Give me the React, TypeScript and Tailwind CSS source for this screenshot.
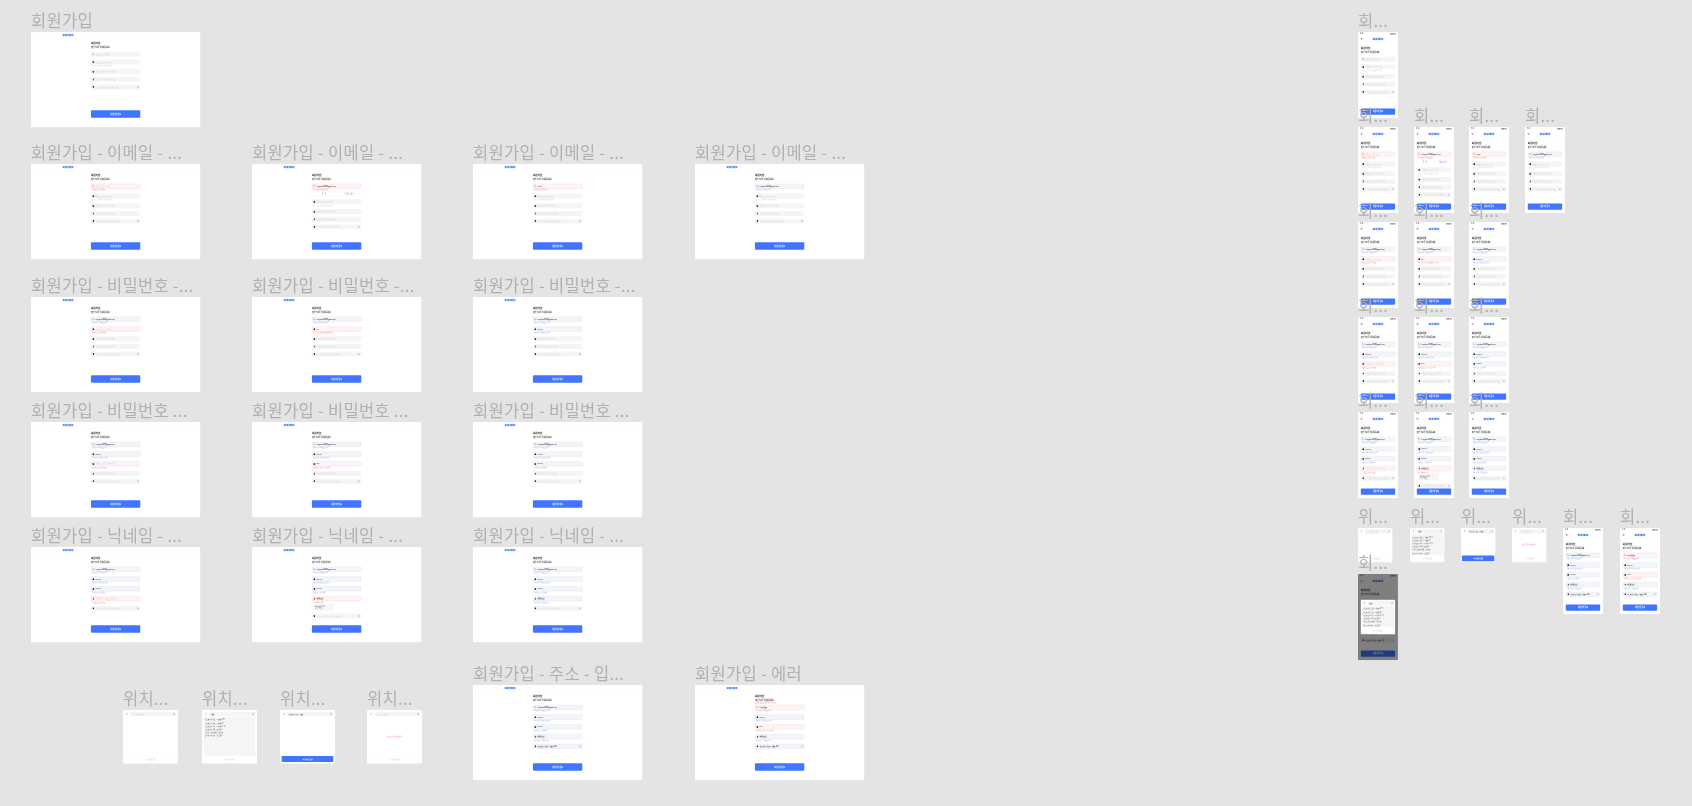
import type { ReactNode } from "react";
import { ArrowLeft, ChevronLeft, Lock, LockKeyhole, Mail, MapPin, Search, UserRound } from "lucide-react";

type FieldData = {
  icon: typeof Mail;
  placeholder: string;
  value?: string;
  state?: "idle" | "error" | "ok";
  hint?: string;
  search?: boolean;
  dup?: boolean;
  suggest?: boolean;
};

const EMAIL: FieldData = { icon: Mail, placeholder: "이메일을 입력해주세요" };
const PW: FieldData = { icon: Lock, placeholder: "비밀번호를 입력해주세요", hint: "영문, 숫자, 특수문자 포함 8자 이상" };
const CONFIRM: FieldData = { icon: LockKeyhole, placeholder: "비밀번호를 다시 입력해주세요" };
const NICK: FieldData = { icon: UserRound, placeholder: "닉네임을 2자 이상 입력해주세요" };
const LOC: FieldData = { icon: MapPin, placeholder: "주소를 검색하여 위치를 설정해주세요", search: true };

const emailOk: FieldData = { ...EMAIL, value: "rockybee1234@gmail.com", state: "ok", hint: "사용 가능한 이메일입니다" };
const pwOk: FieldData = { ...PW, value: "••••••••••", state: "ok", hint: "사용 가능한 비밀번호입니다" };
const confirmOk: FieldData = { ...CONFIRM, value: "••••••••••", state: "ok", hint: "비밀번호가 일치합니다" };
const nickOk: FieldData = { ...NICK, value: "행복한꿀벌", state: "ok", hint: "사용 가능한 닉네임입니다" };
const locOk: FieldData = { ...LOC, value: "서울특별시 강남구 역삼동 123", state: "ok" };

const screens = {
  base: [EMAIL, PW, CONFIRM, NICK, LOC],
  emailEmpty: [{ ...EMAIL, state: "error", hint: "이메일을 입력해주세요" }, PW, CONFIRM, NICK, LOC],
  emailDup: [
    { ...EMAIL, value: "rockybee1234@gmail.com", state: "error", hint: "이미 가입된 이메일입니다", dup: true },
    PW,
    CONFIRM,
    NICK,
    LOC,
  ],
  emailBad: [{ ...EMAIL, value: "rocky", state: "error", hint: "이메일 형식이 아닙니다" }, PW, CONFIRM, NICK, LOC],
  emailOk: [emailOk, PW, CONFIRM, NICK, LOC],
  pwEmpty: [emailOk, { ...PW, state: "error", hint: "비밀번호를 입력해주세요" }, CONFIRM, NICK, LOC],
  pwBad: [emailOk, { ...PW, value: "••••", state: "error", hint: "영문, 숫자, 특수문자 포함 8자 이상" }, CONFIRM, NICK, LOC],
  pwOk: [emailOk, pwOk, CONFIRM, NICK, LOC],
  confirmEmpty: [emailOk, pwOk, { ...CONFIRM, state: "error", hint: "비밀번호를 입력해주세요" }, NICK, LOC],
  confirmBad: [emailOk, pwOk, { ...CONFIRM, value: "••••••", state: "error", hint: "비밀번호가 일치하지 않습니다" }, NICK, LOC],
  confirmOk: [emailOk, pwOk, confirmOk, NICK, LOC],
  nickEmpty: [emailOk, pwOk, confirmOk, { ...NICK, state: "error", hint: "닉네임을 입력해주세요" }, LOC],
  nickDup: [emailOk, pwOk, confirmOk, { ...NICK, value: "행복한꿀벌", state: "error", hint: "이미 사용중입니다", suggest: true }, LOC],
  nickOk: [emailOk, pwOk, confirmOk, nickOk, LOC],
  done: [emailOk, pwOk, confirmOk, nickOk, locOk],
  failed: [
    { ...emailOk, state: "error", hint: "이미 가입된 이메일입니다", value: "rocky@gm" },
    pwOk,
    { ...confirmOk, state: "error", hint: "비밀번호가 일치하지 않습니다", value: "••••••" },
    nickOk,
    locOk,
  ],
} satisfies Record<string, FieldData[]>;

const Field = ({ data }: { data: FieldData }) => {
  const Icon = data.icon;
  const state = data.state ?? "idle";
  return (
    <div className="flex flex-col">
      <div
        className={
          state === "error"
            ? "flex h-[42px] items-center gap-[8px] rounded-[6px] border-2 border-[#ffb9b9] bg-[#fdf5f5] px-[10px]"
            : state === "ok"
              ? "flex h-[42px] items-center gap-[8px] rounded-[6px] border-2 border-[#c4d4ff] bg-[#f5f5f5] px-[10px]"
              : "flex h-[42px] items-center gap-[8px] rounded-[6px] bg-[#f5f5f5] px-[12px]"
        }
      >
        <Icon size={18} className={data.icon === Mail ? "shrink-0 text-[#666666]" : "shrink-0 fill-[#222222] text-[#222222]"} />
        <span className={data.value ? "flex-1 whitespace-nowrap text-[13px] font-medium text-[#222222]" : "flex-1 whitespace-nowrap text-[13px] text-[#c4c4c4]"}>
          {data.value ?? data.placeholder}
        </span>
        {data.search && <Search size={18} strokeWidth={3} className="shrink-0 text-[#6f97ff]" />}
      </div>
      {data.hint && (
        <p
          className={
            state === "error"
              ? "h-[18px] whitespace-nowrap pl-[8px] text-[12px] leading-[18px] text-[#ff5b5b]"
              : state === "ok"
                ? "h-[18px] whitespace-nowrap pl-[8px] text-[12px] leading-[18px] text-[#6f97ff]"
                : "h-[18px] whitespace-nowrap pl-[8px] text-[12px] leading-[18px] text-[#c8c8c8]"
          }
        >
          {data.hint}
        </p>
      )}
      {data.dup && (
        <div className="mb-[5px] mt-[4px] flex gap-[8px]">
          <button className="h-[40px] flex-1 rounded-[6px] border border-[#dddddd] bg-white text-[13px] text-[#3f75ff]">로그인</button>
          <button className="h-[40px] flex-1 rounded-[6px] border border-[#dddddd] bg-white text-[13px] text-[#3f75ff]">비밀번호 찾기</button>
        </div>
      )}
      {data.suggest && (
        <div className="mb-[2px] ml-[14px] mt-[4px] flex h-[60px] w-[170px] flex-col justify-center rounded-[4px] bg-[#f5f5f5] px-[12px] text-[13px] text-[#444444]">
          <span>행복한꿀벌123</span>
          <span className="text-[#888888]">추천 닉네임</span>
        </div>
      )}
    </div>
  );
};

const Logo = () => (
  <span className="rounded-[2px] bg-[#d5e1ff] px-[3px] text-[19px] font-black leading-[24px] text-[#2f66ff]">RENTBEE</span>
);

const SubmitButton = ({ tall }: { tall?: boolean }) => (
  <button className={tall ? "h-[62px] w-full rounded-[8px] bg-[#3f75ff] text-[16px] font-bold text-white" : "h-[54px] w-full rounded-[8px] bg-[#3f75ff] text-[15px] font-bold text-white"}>
    회원가입 완료
  </button>
);

const Form = ({ fields, failed }: { fields: FieldData[]; failed?: boolean }) => (
  <>
    <div className="h-[88px]">
      <h1 className="h-[30px] text-[22px] font-bold leading-[30px] text-[#111111]">회원가입</h1>
      <p className="mt-[8px] h-[24px] text-[15px] font-medium leading-[24px] text-[#222222]">계정 정보를 입력해주세요</p>
      {failed && <p className="text-[13px] leading-[16px] text-[#ff5b5b]">입력한 정보를 다시 확인해주세요</p>}
    </div>
    <div className="flex flex-col gap-[23px]">
      {fields.map((f) => (
        <Field key={f.placeholder} data={f} />
      ))}
    </div>
  </>
);

const Desktop = ({ fields, failed }: { fields: FieldData[]; failed?: boolean }) => (
  <div className="flex h-[810px] w-[1440px] origin-top-left scale-[0.1175] flex-col bg-white">
    <header className="flex h-[54px] items-center border-b border-[#eeeeee] pl-[268px]">
      <Logo />
    </header>
    <main className="mx-auto flex w-[420px] flex-1 flex-col pb-[81px] pt-[27px]">
      <Form fields={fields} failed={failed} />
      <div className="mt-auto">
        <SubmitButton tall />
      </div>
    </main>
  </div>
);

const MobileShell = ({ fields, children }: { fields: FieldData[]; children?: ReactNode }) => (
  <div className="relative flex h-[732px] w-[340px] origin-top-left scale-[0.1175] flex-col bg-white">
    <div className="flex h-[32px] items-center justify-between px-[20px] text-[12px] font-semibold text-[#444444]">
      <span>9:41</span>
      <div className="flex items-center gap-[3px]">
        <span className="h-[8px] w-[12px] bg-[#333333]" />
        <span className="h-[8px] w-[10px] bg-[#333333]" />
        <span className="h-[8px] w-[17px] rounded-[2px] bg-[#333333]" />
      </div>
    </div>
    <header className="relative flex h-[53px] items-center justify-center border-b border-[#eeeeee]">
      <ArrowLeft size={22} strokeWidth={3} className="absolute left-[20px] text-[#222222]" />
      <Logo />
    </header>
    <main className="flex flex-1 flex-col px-[24px] pb-[28px] pt-[38px]">
      <Form fields={fields} />
      <div className="mt-auto">
        <SubmitButton />
      </div>
    </main>
    {children}
  </div>
);

type SheetKind = "empty" | "list" | "picked" | "noresult";

const addresses = [
  "서울특별시 강남구 역삼동 123-1",
  "서울특별시 강남구 역삼로 45",
  "서울특별시 서초구 서초동 77-12",
  "서울특별시 송파구 잠실동 9",
  "경기도 성남시 분당구 정자동",
  "인천광역시 연수구 송도동 5",
];

const Sheet = ({ kind, wide }: { kind: SheetKind; wide?: boolean }) => (
  <div className={wide ? "flex h-[456px] w-[468px] flex-col gap-[6px] rounded-[8px] bg-white p-[14px]" : "flex h-[292px] w-[292px] flex-col gap-[6px] rounded-[8px] bg-white p-[8px]"}>
    <div className="flex h-[40px] shrink-0 items-center gap-[8px]">
      <div className="flex h-[40px] w-[40px] shrink-0 items-center justify-center rounded-[4px] border border-[#eeeeee]">
        <ChevronLeft size={22} strokeWidth={3} className="text-[#222222]" />
      </div>
      <div className="flex h-[40px] min-w-0 flex-1 items-center rounded-[6px] bg-[#f5f5f5] px-[10px]">
        <span className={kind === "list" || kind === "picked" ? "flex-1 whitespace-nowrap text-[12px] text-[#222222]" : "flex-1 whitespace-nowrap text-[12px] text-[#bdbdbd]"}>
          {kind === "list" ? "역삼동" : kind === "picked" ? "서울특별시 강남구 역삼동" : "주소를 검색해주세요"}
        </span>
        <Search size={18} strokeWidth={3} className="shrink-0 text-[#6f97ff]" />
      </div>
    </div>
    <div className={kind === "list" ? "flex flex-1 flex-col gap-[8px] overflow-hidden bg-[#f5f5f5] p-[12px] text-[13px] text-[#444444]" : "flex flex-1 items-center justify-center text-[14px] text-[#ff5b5b]"}>
      {kind === "list" && addresses.map((a) => <span key={a} className="whitespace-nowrap">{a}</span>)}
      {kind === "noresult" && "검색 결과가 없습니다"}
    </div>
    {kind === "picked" ? (
      <button className="h-[50px] shrink-0 rounded-[6px] bg-[#3f75ff] text-[14px] font-bold text-white">이 위치로 설정</button>
    ) : (
      <button className="h-[48px] shrink-0 rounded-[6px] border border-[#eeeeee] bg-white text-[14px] text-[#bdbdbd]">이 위치로 설정</button>
    )}
  </div>
);

// Frame on the free canvas: the label hangs above its origin, and sits over whatever frame is above
const Frame = ({ at, label, children }: { at: string; label: string; children: ReactNode }) => (
  <div className={`absolute h-0 w-0 ${at}`}>
    <span className="absolute bottom-full left-0 z-10 whitespace-nowrap text-[16.5px] leading-[24px] tracking-[0.3px] text-[#b0b0b0]">{label}</span>
    {children}
  </div>
);

const SheetFrame = ({ kind, wide }: { kind: SheetKind; wide?: boolean }) => (
  <div className="origin-top-left scale-[0.1175]">
    <Sheet kind={kind} wide={wide} />
  </div>
);

const App = () => {
  return (
    <div className="relative h-[806px] w-[1692px] overflow-hidden bg-[#e4e4e4] font-['Noto_Sans_CJK_KR','Noto_Sans',sans-serif] blur-[0.35px]">
      <Frame at="left-[31px] top-[32px]" label="회원가입"><Desktop fields={screens.base} /></Frame>

      <Frame at="left-[31px] top-[164px]" label="회원가입 - 이메일 - ..."><Desktop fields={screens.emailEmpty} /></Frame>
      <Frame at="left-[252px] top-[164px]" label="회원가입 - 이메일 - ..."><Desktop fields={screens.emailDup} /></Frame>
      <Frame at="left-[473px] top-[164px]" label="회원가입 - 이메일 - ..."><Desktop fields={screens.emailBad} /></Frame>
      <Frame at="left-[695px] top-[164px]" label="회원가입 - 이메일 - ..."><Desktop fields={screens.emailOk} /></Frame>

      <Frame at="left-[31px] top-[297px]" label="회원가입 - 비밀번호 -..."><Desktop fields={screens.pwEmpty} /></Frame>
      <Frame at="left-[252px] top-[297px]" label="회원가입 - 비밀번호 -..."><Desktop fields={screens.pwBad} /></Frame>
      <Frame at="left-[473px] top-[297px]" label="회원가입 - 비밀번호 -..."><Desktop fields={screens.pwOk} /></Frame>

      <Frame at="left-[31px] top-[422px]" label="회원가입 - 비밀번호 ..."><Desktop fields={screens.confirmEmpty} /></Frame>
      <Frame at="left-[252px] top-[422px]" label="회원가입 - 비밀번호 ..."><Desktop fields={screens.confirmBad} /></Frame>
      <Frame at="left-[473px] top-[422px]" label="회원가입 - 비밀번호 ..."><Desktop fields={screens.confirmOk} /></Frame>

      <Frame at="left-[31px] top-[547px]" label="회원가입 - 닉네임 - ..."><Desktop fields={screens.nickEmpty} /></Frame>
      <Frame at="left-[252px] top-[547px]" label="회원가입 - 닉네임 - ..."><Desktop fields={screens.nickDup} /></Frame>
      <Frame at="left-[473px] top-[547px]" label="회원가입 - 닉네임 - ..."><Desktop fields={screens.nickOk} /></Frame>

      <Frame at="left-[473px] top-[685px]" label="회원가입 - 주소 - 입..."><Desktop fields={screens.done} /></Frame>
      <Frame at="left-[695px] top-[685px]" label="회원가입 - 에러"><Desktop fields={screens.failed} failed /></Frame>

      <Frame at="left-[123px] top-[710px]" label="위치..."><SheetFrame kind="empty" wide /></Frame>
      <Frame at="left-[202px] top-[710px]" label="위치..."><SheetFrame kind="list" wide /></Frame>
      <Frame at="left-[280px] top-[710px]" label="위치..."><SheetFrame kind="picked" wide /></Frame>
      <Frame at="left-[367px] top-[710px]" label="위치..."><SheetFrame kind="noresult" wide /></Frame>

      <Frame at="left-[1358px] top-[32px]" label="회..."><MobileShell fields={screens.base} /></Frame>

      <Frame at="left-[1358px] top-[127px]" label="회..."><MobileShell fields={screens.emailEmpty} /></Frame>
      <Frame at="left-[1414px] top-[127px]" label="회..."><MobileShell fields={screens.emailDup} /></Frame>
      <Frame at="left-[1469px] top-[127px]" label="회..."><MobileShell fields={screens.emailBad} /></Frame>
      <Frame at="left-[1525px] top-[127px]" label="회..."><MobileShell fields={screens.emailOk} /></Frame>

      <Frame at="left-[1358px] top-[222px]" label="회..."><MobileShell fields={screens.pwEmpty} /></Frame>
      <Frame at="left-[1414px] top-[222px]" label="회..."><MobileShell fields={screens.pwBad} /></Frame>
      <Frame at="left-[1469px] top-[222px]" label="회..."><MobileShell fields={screens.pwOk} /></Frame>

      <Frame at="left-[1358px] top-[317px]" label="회..."><MobileShell fields={screens.confirmEmpty} /></Frame>
      <Frame at="left-[1414px] top-[317px]" label="회..."><MobileShell fields={screens.confirmBad} /></Frame>
      <Frame at="left-[1469px] top-[317px]" label="회..."><MobileShell fields={screens.confirmOk} /></Frame>

      <Frame at="left-[1358px] top-[412px]" label="회..."><MobileShell fields={screens.nickEmpty} /></Frame>
      <Frame at="left-[1414px] top-[412px]" label="회..."><MobileShell fields={screens.nickDup} /></Frame>
      <Frame at="left-[1469px] top-[412px]" label="회..."><MobileShell fields={screens.nickOk} /></Frame>

      <Frame at="left-[1358px] top-[528px]" label="위..."><SheetFrame kind="empty" /></Frame>
      <Frame at="left-[1410px] top-[528px]" label="위..."><SheetFrame kind="list" /></Frame>
      <Frame at="left-[1461px] top-[528px]" label="위..."><SheetFrame kind="picked" /></Frame>
      <Frame at="left-[1512px] top-[528px]" label="위..."><SheetFrame kind="noresult" /></Frame>

      <Frame at="left-[1563px] top-[528px]" label="회..."><MobileShell fields={screens.done} /></Frame>
      <Frame at="left-[1620px] top-[528px]" label="회..."><MobileShell fields={screens.failed} /></Frame>

      <Frame at="left-[1358px] top-[574px]" label="회...">
        <MobileShell fields={screens.done}>
          <div className="absolute inset-0 flex items-center justify-center bg-black/50">
            <Sheet kind="list" />
          </div>
        </MobileShell>
      </Frame>
    </div>
  );
};

export default App;
